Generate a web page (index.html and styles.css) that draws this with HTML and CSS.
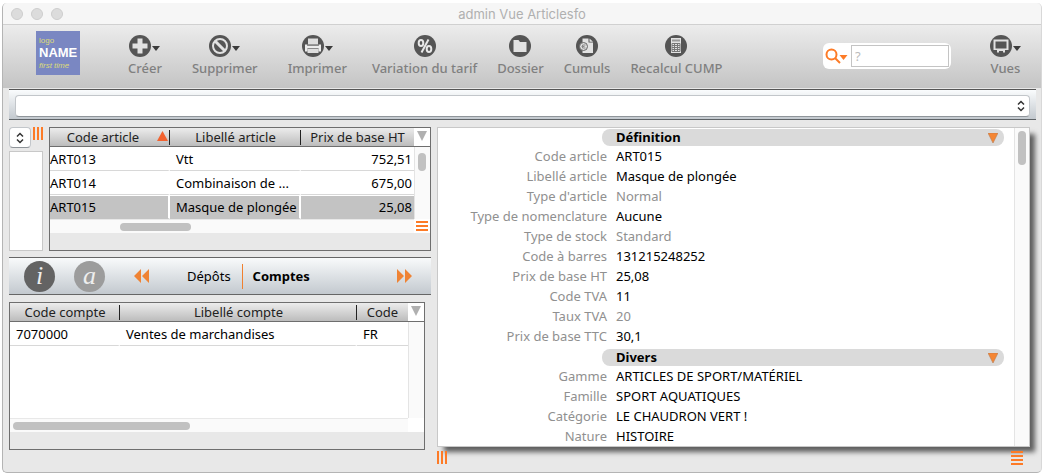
FILE: index.html
```html
<!DOCTYPE html>
<html lang="fr">
<head>
<meta charset="utf-8">
<title>admin Vue Articlesfo</title>
<link rel="stylesheet" href="styles.css">
</head>
<body>
<div class="window">
  <header class="titlebar">
    <div class="lights"><span class="light"></span><span class="light"></span><span class="light"></span></div>
    <h1 class="title">admin Vue Articlesfo</h1>
  </header>

  <div class="toolbar">
    <div class="logo"><span class="logo-top">logo</span><strong class="logo-name">NAME</strong><em class="logo-sub">first time</em></div>
    <div class="tools">
      <button class="tool has-menu" type="button">
        <span class="tool-icon"><svg width="22" height="22" viewBox="0 0 22 22"><circle cx="11" cy="11" r="11" fill="#555"/><path d="M8.500 3.500h5v5h5v5h-5v5h-5v-5h-5v-5h5z" fill="#e2e2e2"/></svg><svg class="caret" width="8" height="5" viewBox="0 0 8 5"><path d="M0 0h8L4 5z" fill="#3c3c3c"/></svg></span>
        <span>Créer</span>
      </button>
      <button class="tool has-menu" type="button">
        <span class="tool-icon"><svg width="22" height="22" viewBox="0 0 22 22"><circle cx="11" cy="11" r="11" fill="#555"/><circle cx="11" cy="11" r="7" fill="none" stroke="#e2e2e2" stroke-width="2"/><path d="M6 6l10 10" stroke="#e2e2e2" stroke-width="3"/></svg><svg class="caret" width="8" height="5" viewBox="0 0 8 5"><path d="M0 0h8L4 5z" fill="#3c3c3c"/></svg></span>
        <span>Supprimer</span>
      </button>
      <button class="tool has-menu" type="button">
        <span class="tool-icon"><svg width="22" height="22" viewBox="0 0 22 22"><circle cx="11" cy="11" r="11" fill="#555"/><path d="M6 3.500h10v6H6zM5.500 13h11v5h-11z" fill="#dedede"/><path d="M3 9.500v7h2.500v-3h11v3H19v-7h-2.500v1.500h-11V9.500z" fill="#ececec"/><path d="M5.500 10.500h11M5.500 13.500h11" stroke="#8a8a8a"/></svg><svg class="caret" width="8" height="5" viewBox="0 0 8 5"><path d="M0 0h8L4 5z" fill="#3c3c3c"/></svg></span>
        <span>Imprimer</span>
      </button>
      <button class="tool" type="button">
        <span class="tool-icon"><svg width="22" height="22" viewBox="0 0 22 22"><circle cx="11" cy="11" r="11" fill="#555"/><g fill="none" stroke="#e8e8e8" stroke-width="2"><ellipse cx="7" cy="8" rx="2.300" ry="3"/><ellipse cx="15" cy="14" rx="2.300" ry="3"/><path d="M14.500 4.500l-7 13"/></g></svg></span>
        <span>Variation du tarif</span>
      </button>
      <button class="tool" type="button">
        <span class="tool-icon"><svg width="22" height="22" viewBox="0 0 22 22"><circle cx="11" cy="11" r="11" fill="#555"/><path d="M4.500 5h5l1.500 2h6.500v10h-13z" fill="#e2e2e2"/></svg></span>
        <span>Dossier</span>
      </button>
      <button class="tool" type="button">
        <span class="tool-icon"><svg width="22" height="22" viewBox="0 0 22 22"><circle cx="11" cy="11" r="11" fill="#555"/><path d="M6.500 3.500h6v4h4.500V18H6.500z" fill="#e2e2e2"/><path d="M13.500 3.500L17 6.700h-3.500z" fill="#e2e2e2"/><circle cx="7.500" cy="11.500" r="4" fill="#ddd" stroke="#666"/><path d="M9.500 10H6.500v3h3M5.500 11.500h3" fill="none" stroke="#888"/></svg></span>
        <span>Cumuls</span>
      </button>
      <button class="tool" type="button">
        <span class="tool-icon"><svg width="22" height="22" viewBox="0 0 22 22"><circle cx="11" cy="11" r="11" fill="#555"/><path d="M6 3h10v15H6z" fill="#e2e2e2"/><path d="M7 4.500h8v2H7z" fill="#999"/><path d="M7 8.500h8v8H7zM7 10.500h8M7 12.500h8M7 14.500h8M9.500 8.500v8M12.500 8.500v8" fill="none" stroke="#777"/></svg></span>
        <span>Recalcul CUMP</span>
      </button>
    </div>
    <div class="search">
      <button class="search-menu" type="button" aria-label="Options de recherche"><svg width="23" height="16" viewBox="0 0 23 16"><circle cx="6.500" cy="6.500" r="5" fill="none" stroke="#fd7b27" stroke-width="2"/><path d="M10 10l5 5" stroke="#fd7b27" stroke-width="2"/><path d="M14.500 7h8l-4 5z" fill="#fd7b27"/></svg></button>
      <input class="search-input" type="text" placeholder="?" aria-label="Rechercher">
    </div>
    <button class="tool views" type="button">
      <span class="tool-icon"><svg width="22" height="22" viewBox="0 0 22 22"><circle cx="11" cy="11" r="11" fill="#555"/><path d="M3.500 4.500h15V15H15v2.500h-2V16H9v1.500H7V15H3.500z" fill="#e2e2e2"/><path d="M5.500 6.500h11v7h-11z" fill="#555"/></svg><svg class="caret" width="8" height="5" viewBox="0 0 8 5"><path d="M0 0h8L4 5z" fill="#3c3c3c"/></svg></span>
      <span>Vues</span>
    </button>
  </div>

  <div class="content">
    <div class="filter">
      <select class="picker" aria-label="Filtre"><option></option></select>
    </div>

    <div class="panes">
      <div class="left">
        <div class="list-row">
          <div class="side">
            <div class="side-top">
              <select class="picker mini" aria-label="Liste"><option></option></select>
              <span class="grip-v"></span>
            </div>
            <div class="side-box"></div>
          </div>
          <div class="grid articles">
            <table class="data">
              <colgroup><col class="c-code"><col class="c-label"><col></colgroup>
              <thead><tr><th>Code article<svg class="sort" width="11" height="10" viewBox="0 0 11 10"><path d="M5.500 0L11 10H0z" fill="#f2622f"/></svg></th><th>Libellé article</th><th>Prix de base HT</th></tr></thead>
              <tbody>
                <tr><td>ART013</td><td>Vtt</td><td class="num">752,51</td></tr>
                <tr><td>ART014</td><td>Combinaison de ...</td><td class="num">675,00</td></tr>
                <tr class="selected"><td>ART015</td><td>Masque de plongée</td><td class="num">25,08</td></tr>
              </tbody>
            </table>
            <div class="vcol">
              <button class="corner" type="button" aria-label="Colonnes"><svg width="10" height="10" viewBox="0 0 10 10"><path d="M0 0h10L5 10z" fill="#b0b0b0"/></svg></button>
              <div class="vtrack"><span class="vthumb short"></span></div>
            </div>
            <div class="htrack"><span class="hthumb mid"></span></div>
            <div class="hcorner"><span class="grip-h three"></span></div>
          </div>
        </div>

        <nav class="tabs">
          <button class="round info" type="button" aria-label="Informations">i</button>
          <button class="round alpha" type="button" aria-label="Attributs">a</button>
          <button class="arrows" type="button" aria-label="Précédent"><svg width="15" height="14" viewBox="0 0 15 14"><path d="M7 0v14L0 7zM15 0v14L8 7z" fill="#ef8334"/></svg></button>
          <div class="tab-list">
            <button class="tab" type="button">Dépôts</button>
            <button class="tab active" type="button">Comptes</button>
          </div>
          <button class="arrows" type="button" aria-label="Suivant"><svg width="15" height="14" viewBox="0 0 15 14"><path d="M0 0v14l7-7zM8 0v14l7-7z" fill="#ef8334"/></svg></button>
        </nav>

        <div class="grid accounts">
          <div class="rows">
            <table class="data">
              <colgroup><col class="a-code"><col><col class="a-country"></colgroup>
              <thead><tr><th>Code compte</th><th>Libellé compte</th><th>Code</th></tr></thead>
              <tbody><tr><td>7070000</td><td>Ventes de marchandises</td><td>FR</td></tr></tbody>
            </table>
          </div>
          <div class="vcol">
            <button class="corner" type="button" aria-label="Colonnes"><svg width="10" height="10" viewBox="0 0 10 10"><path d="M0 0h10L5 10z" fill="#b0b0b0"/></svg></button>
            <div class="vtrack"></div>
          </div>
          <div class="htrack"><span class="hthumb long"></span></div>
          <div class="hcorner"></div>
        </div>
      </div>

      <div class="right">
        <section class="detail">
          <div class="fields">
            <h2 class="group">Définition<svg width="10" height="10" viewBox="0 0 10 10"><path d="M0 0h10L5 10z" fill="#f58634" stroke="#b87a50" stroke-width=".6"/></svg></h2>
            <dl class="pairs">
              <dt>Code article</dt><dd>ART015</dd>
              <dt>Libellé article</dt><dd>Masque de plongée</dd>
              <dt>Type d'article</dt><dd class="muted">Normal</dd>
              <dt>Type de nomenclature</dt><dd>Aucune</dd>
              <dt>Type de stock</dt><dd class="muted">Standard</dd>
              <dt>Code à barres</dt><dd>131215248252</dd>
              <dt>Prix de base HT</dt><dd>25,08</dd>
              <dt>Code TVA</dt><dd>11</dd>
              <dt>Taux TVA</dt><dd class="muted">20</dd>
              <dt>Prix de base TTC</dt><dd>30,1</dd>
            </dl>
            <h2 class="group">Divers<svg width="10" height="10" viewBox="0 0 10 10"><path d="M0 0h10L5 10z" fill="#f58634" stroke="#b87a50" stroke-width=".6"/></svg></h2>
            <dl class="pairs">
              <dt>Gamme</dt><dd>ARTICLES DE SPORT/MATÉRIEL</dd>
              <dt>Famille</dt><dd>SPORT AQUATIQUES</dd>
              <dt>Catégorie</dt><dd>LE CHAUDRON VERT !</dd>
              <dt>Nature</dt><dd>HISTOIRE</dd>
            </dl>
          </div>
          <div class="vtrack"><span class="vthumb tall"></span></div>
        </section>
        <div class="grips"><span class="grip-v"></span><span class="grip-h"></span></div>
      </div>
    </div>
  </div>
</div>
</body>
</html>
```
FILE: styles.css
```css
* { box-sizing: border-box; }
body {
  margin: 0;
  padding: 3px 0 0 2px;
  min-height: 100vh;
  display: flex;
  background: #fff;
  color: #000;
  font: 13px/20px "Noto Sans", "Open Sans", sans-serif;
}
button, input, select { font: inherit; color: inherit; margin: 0; }
button { border: 0; padding: 0; background: none; }
svg { display: block; flex: none; }

.window {
  flex: 1;
  min-width: 0;
  display: flex;
  flex-direction: column;
  background: #e8e8e8;
  border: 1px solid #b4b4b4;
  border-top: 0;
  border-right-color: #d8d8d8;
  border-radius: 5px;
  overflow: hidden;
}

.titlebar {
  display: grid;
  grid-template-columns: 1fr auto 1fr;
  align-items: center;
  height: 22px;
  padding: 0 8px 0 8px;
  background: #f6f6f6;
  border-bottom: 1px solid #d0d0d0;
}
.lights { display: flex; gap: 8px; }
.light {
  width: 12px;
  height: 12px;
  border: 1px solid #cdcdcd;
  border-radius: 50%;
  background: #dcdcdc;
}
.title {
  margin: 0;
  color: #b0b0b0;
  font: 400 13px/20px Inter, sans-serif;
}

.toolbar {
  display: flex;
  align-items: flex-start;
  height: 63px;
  padding: 6px 20px 0 33px;
  background: linear-gradient(#ececec, #c4c4c4);
}
.logo {
  display: flex;
  flex-direction: column;
  width: 44px;
  height: 44px;
  padding: 4px 3px;
  background: #7a87c2;
  color: #dcdc78;
  font: 8px/12px "Liberation Sans", sans-serif;
}
.logo-name { color: #fff; font-size: 13px; }
.logo-sub { line-height: 13px; }
.tools { display: flex; gap: 20px; margin-left: 43px; }
.tool {
  display: flex;
  flex-direction: column;
  align-items: center;
  gap: 1px;
  padding-top: 4px;
  color: #808080;
  font-weight: 500;
  white-space: nowrap;
}
.has-menu { padding: 4px 5px 0; }
.tool-icon { display: flex; align-items: center; gap: 1px; }
.caret { margin-top: 5px; }
.search {
  display: flex;
  align-items: center;
  width: 128px;
  height: 26px;
  margin: 12px 39px 0 auto;
  padding: 2px;
  border-radius: 6px;
  background: #fff;
}
.search-menu { flex: none; }
.search-input {
  flex: 1;
  min-width: 0;
  height: 22px;
  margin-left: 3px;
  padding: 0 3px;
  border: 1px solid #c4c4c4;
  background: #fff;
}
.search-input::placeholder { color: #bbb; }

.content {
  flex: 1;
  display: flex;
  flex-direction: column;
  gap: 7px;
  padding: 1px 5px 7px 6px;
}
.filter {
  display: flex;
  height: 31px;
  padding: 5px 6px 2px;
  border-top: 1px solid #555;
  border-bottom: 1px solid #5f6468;
  background: linear-gradient(#fafcfd, #c3c9cf);
}
.picker {
  flex: 1;
  height: 22px;
  border: 1px solid #c2c6ca;
  border-bottom-color: #8f959a;
  border-radius: 4px;
  appearance: none;
  background: #fff url('data:image/svg+xml,<svg xmlns="http://www.w3.org/2000/svg" width="8" height="12" viewBox="0 0 8 12"><path d="M1 4.500L4 1.500 7 4.500M1 7.500L4 10.500 7 7.500" fill="none" stroke="%23333" stroke-width="1.500"/></svg>') no-repeat right 4px center;
}
.mini {
  flex: none;
  width: 22px;
  height: 21px;
  padding: 0;
  background-position: center;
}

.panes {
  flex: 1;
  display: grid;
  grid-template-columns: minmax(0, 422fr) minmax(0, 593fr);
  column-gap: 6px;
  padding-right: 6px;
}
.left { display: flex; flex-direction: column; }
.list-row { display: flex; gap: 6px; }
.side { display: flex; flex-direction: column; gap: 3px; width: 34px; }
.side-top { display: flex; gap: 2px; }
.side-box { flex: 1; border: 1px solid #c8c8c8; background: #fff; }
.grip-v {
  width: 11px;
  height: 13px;
  background: repeating-linear-gradient(90deg, #fd7b27 0 2px, transparent 2px 4px);
}
.grip-h {
  width: 12px;
  height: 14px;
  background: repeating-linear-gradient(#fd7b27 0 2px, transparent 2px 4px);
}
.three { height: 10px; }

.grid {
  display: grid;
  grid-template-columns: minmax(0, 1fr) 16px;
  border: 1px solid #6e6e6e;
}
.articles { flex: 1; min-width: 0; height: 124px; grid-template-rows: auto 14px 1fr; }
.accounts {
  flex: 1;
  margin: 7px 6px 15px 0;
  grid-template-rows: 1fr 14px 17px;
}
.rows { background: #fff; }
.data {
  width: 100%;
  table-layout: fixed;
  border-collapse: separate;
  border-spacing: 0;
  background: #fff;
}
.c-code { width: 120px; }
.c-label { width: 131px; }
.a-code { width: 110px; }
.a-country { width: 51px; }
.data th {
  position: relative;
  height: 19px;
  padding: 0;
  border-bottom: 1px solid #6e6e6e;
  background: linear-gradient(#222, #222) right center / 1px 15px no-repeat, linear-gradient(#ececec, #bcbcbc);
  color: #222;
  font-weight: 400;
  line-height: 18px;
  white-space: nowrap;
}
.articles th:first-child { padding-right: 14px; }
.data th:last-child { background: linear-gradient(#ececec, #bcbcbc); }
.sort { position: absolute; right: 2px; top: 3px; }
.data td {
  height: 24px;
  padding: 0 0 0 6px;
  border-top: 1px solid #fff;
  border-right: 2px solid #fff;
  border-bottom: 1px solid #d8d8d8;
  line-height: 22px;
  white-space: nowrap;
}
.articles td:first-child { padding-left: 0; }
.data td:last-child { border-right: 0; }
.data .num { padding-right: 2px; text-align: right; }
.selected td { background: #c3c3c3; border-bottom-color: #c3c3c3; }
.vcol { display: flex; flex-direction: column; }
.corner {
  display: flex;
  justify-content: center;
  align-items: center;
  height: 19px;
  padding-bottom: 3px;
  background: #fff;
  border-bottom: 1px solid #6e6e6e;
}
.vtrack {
  flex: 1;
  background: #fafafa;
  border-left: 1px solid #e4e4e4;
}
.vthumb {
  display: block;
  width: 8px;
  margin: 6px 0 0 3px;
  border-radius: 4px;
  background: #c1c1c1;
}
.short { height: 18px; }
.tall { height: 34px; margin-top: 3px; }
.htrack {
  padding-top: 3px;
  background: #fafafa;
  border-top: 1px solid #e8e8e8;
}
.hthumb { display: block; height: 8px; border-radius: 4px; background: #c1c1c1; }
.mid { width: 71px; margin-left: 70px; }
.long { width: 177px; margin-left: 3px; }
.hcorner { display: flex; justify-content: center; align-items: center; background: #fff; }

.tabs {
  display: flex;
  align-items: center;
  height: 38px;
  margin-top: 6px;
  padding: 0 19px 0 15px;
  border-top: 1px solid #666;
  border-bottom: 1px solid #666;
  background: linear-gradient(#f8fafb, #c3c9cf);
}
.round {
  width: 31px;
  height: 31px;
  border-radius: 50%;
  color: #eee;
  font: italic 400 26px/30px "Liberation Serif", serif;
}
.info { background: #636363; }
.alpha { margin-left: 19px; background: #9c9c9c; }
.alpha + .arrows { margin-left: 29px; }
.tab-list { flex: 1; display: flex; align-items: center; padding-left: 27px; }
.tab { height: 25px; padding: 0 11px; }
.tab + .tab { padding: 0 10px; border-left: 1px solid #f08030; }
.active { font-weight: 700; }

.right { display: flex; flex-direction: column; }
.detail {
  flex: 1;
  display: grid;
  grid-template-columns: minmax(0, 1fr) 15px;
  border: 1px solid #c8c8c8;
  background: #fff;
  box-shadow: 6px 6px 5px -1px rgba(0, 0, 0, .6);
}
.fields { padding-right: 10px; }
.group {
  display: flex;
  justify-content: space-between;
  align-items: center;
  height: 17px;
  margin: 1px 0 0 164px;
  padding: 0 6px 0 14px;
  border-radius: 8px;
  background: #dadada;
  font-size: 13px;
  line-height: 17px;
}
.pairs {
  display: grid;
  grid-template-columns: 169px 1fr;
  column-gap: 9px;
  margin: 0;
}
.pairs + .group { margin-top: 3px; }
.pairs dt { color: #909090; text-align: right; }
.pairs dd { margin: 0; }
.pairs .muted { color: #909090; }
.grips { display: flex; justify-content: space-between; height: 18px; padding: 4px 7px 0 0; }
```
